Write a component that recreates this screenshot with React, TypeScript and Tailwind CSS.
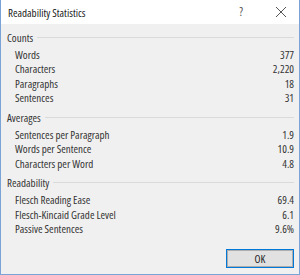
import React from "react";

type Row = [string, string];

const sections: { title: string; rows: Row[]; mt: string }[] = [
  {
    title: "Counts",
    mt: "mt-[6px]",
    rows: [
      ["Words", "377"],
      ["Characters", "2,220"],
      ["Paragraphs", "18"],
      ["Sentences", "31"],
    ],
  },
  {
    title: "Averages",
    mt: "mt-[5px]",
    rows: [
      ["Sentences per Paragraph", "1.9"],
      ["Words per Sentence", "10.9"],
      ["Characters per Word", "4.8"],
    ],
  },
  {
    title: "Readability",
    mt: "mt-[5px]",
    rows: [
      ["Flesch Reading Ease", "69.4"],
      ["Flesch-Kincaid Grade Level", "6.1"],
      ["Passive Sentences", "9.6%"],
    ],
  },
];

export default function App() {
  return (
    <div
      className="w-[300px] h-[275px] flex flex-col bg-[#f0f0f0] border-l border-r border-b border-[#7aa3d8] text-[#333333] [font-stretch:87.5%]"
      style={{ fontFamily: '"Open Sans", "Noto Sans", sans-serif' }}
    >
      <div className="h-[24px] shrink-0 bg-white flex items-center pl-[7px]">
        <span className="text-[11px] text-[#1a1a1a] leading-none flex-1">Readability Statistics</span>
        <span className="text-[12px] text-[#555] leading-none w-[12px] text-center mr-[28px]">?</span>
        <svg width="12" height="12" viewBox="0 0 12 12" className="mr-[12px]">
          <path d="M1 1 L11 11 M11 1 L1 11" stroke="#555" strokeWidth="1" />
        </svg>
      </div>
      <div className="flex-1 flex flex-col pl-[6px] pr-[5px] text-[11px]">
        {sections.map((s) => (
          <div key={s.title} className={s.mt}>
            <div className="h-[14px] flex items-center leading-none">
              <span className="text-[#333]">{s.title}</span>
              <div className="flex-1 ml-[4px] border-t border-[#dadada]" />
            </div>
            <div className="mt-[3px] pl-[8px]">
              {s.rows.map(([l, v]) => (
                <div key={l} className="h-[14.5px] flex items-center justify-between leading-none">
                  <span>{l}</span>
                  <span>{v}</span>
                </div>
              ))}
            </div>
          </div>
        ))}
        <div className="flex justify-end mt-[13px]">
          <div className="w-[68px] h-[19px] border border-[#0078d7]">
            <div className="w-full h-full border border-[#adadad] bg-[#e1e1e1] flex items-center justify-center text-[11px] leading-none text-[#222]">
              OK
            </div>
          </div>
        </div>
      </div>
    </div>
  );
}
